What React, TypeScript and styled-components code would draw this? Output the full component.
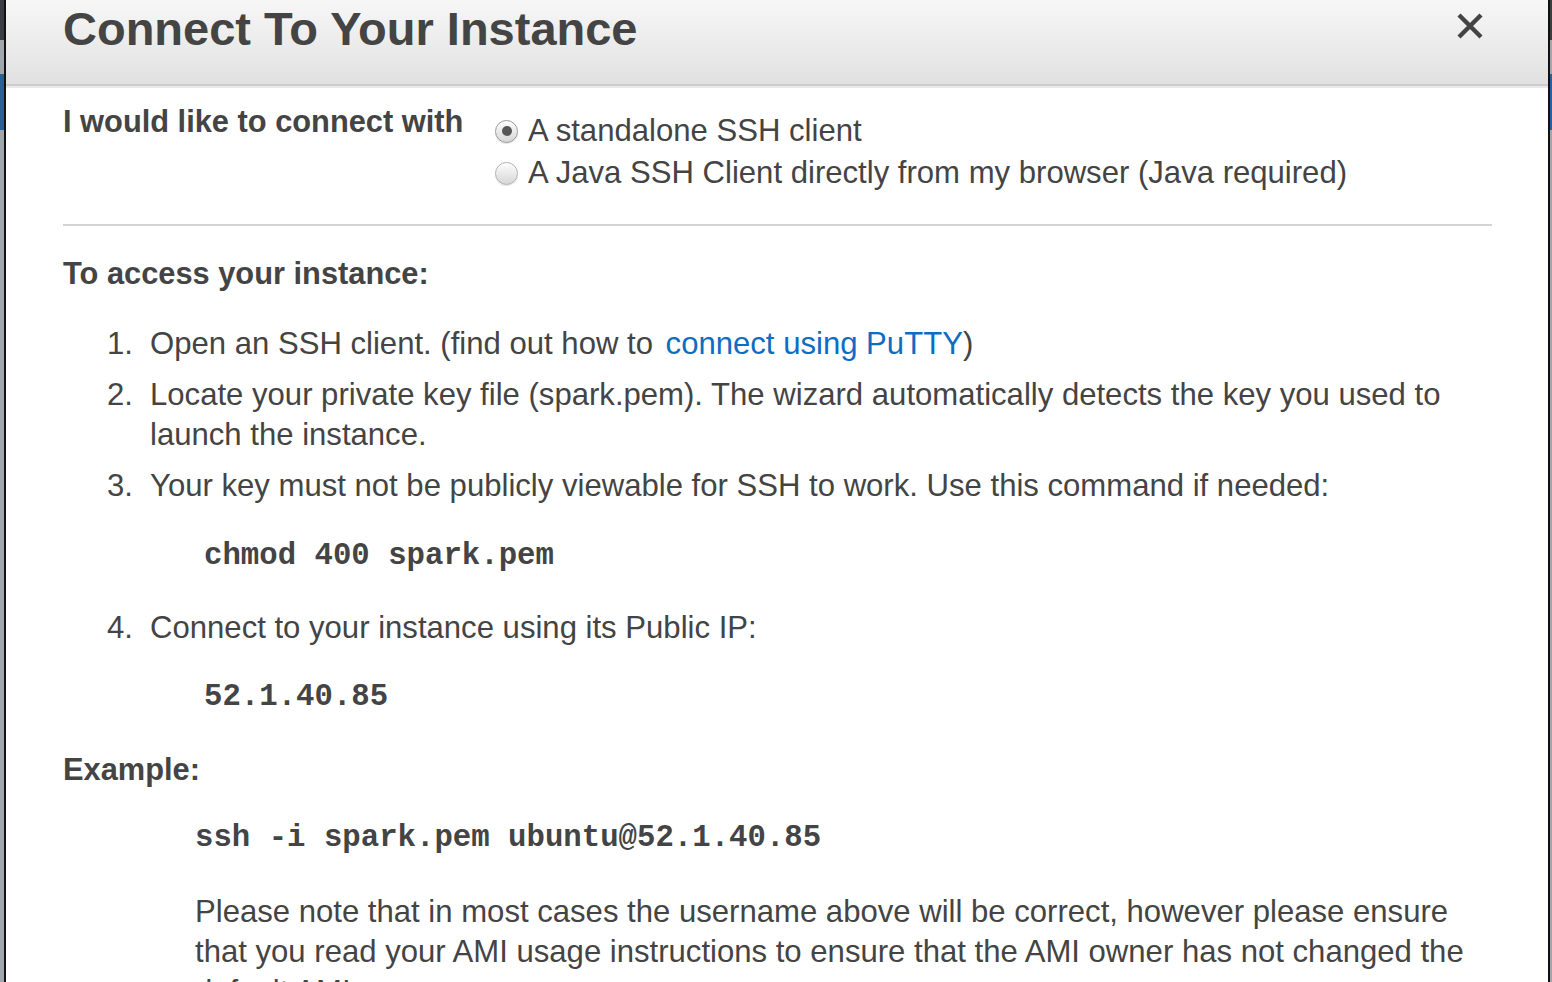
import React from "react";
import styled, { createGlobalStyle } from "styled-components";

const Global = createGlobalStyle`
  html, body { margin: 0; padding: 0; }
  body {
    background: #a2a6ad;
    font-family: "Liberation Sans", Arial, Helvetica, sans-serif;
    overflow: hidden;
  }
`;

const Page = styled.div`
  height: 982px;
  padding: 0 2px 0 4px;
  box-sizing: border-box;
  background: linear-gradient(#3a3d42 0 40px, #a2a6ad 40px 74px, #2b5f98 74px 130px, #a2a6ad 130px);
`;

const Modal = styled.div`
  height: 982px;
  background: #fff;
  border-left: 2px solid #111;
  border-right: 2px solid #111;
  overflow: hidden;
  color: #444;
`;

const Header = styled.div`
  height: 86px;
  box-sizing: border-box;
  padding: 5px 64px 0 57px;
  display: flex;
  justify-content: space-between;
  align-items: flex-start;
  background: linear-gradient(#f7f7f7, #e1e1e1);
  border-bottom: 2px solid #cdcdcd;
  box-shadow: 0 2px 0 #e9e9e9;
`;

const Title = styled.h1`
  margin: 0;
  font-size: 47px;
  line-height: 47px;
  font-weight: bold;
  color: #444;
`;

const Close = styled.button`
  margin-top: 7px;
  width: 28px;
  height: 28px;
  padding: 0;
  border: 0;
  background: none;
  display: flex;
`;

const Body = styled.div`
  padding: 15px 56px 0 57px;
  font-size: 31.1px;
`;

const ConnectRow = styled.div`
  display: flex;
  align-items: flex-start;
`;

const Label = styled.div`
  width: 432px;
  font-weight: bold;
  font-size: 30.8px;
  line-height: 42px;
`;

const Radios = styled.div`
  margin-top: 9px;
  display: flex;
  flex-direction: column;
`;

const RadioLine = styled.label`
  display: flex;
  align-items: center;
  height: 42px;
  line-height: 42px;
  gap: 10px;
`;

const RadioDot = styled.span<{ $on?: boolean }>`
  width: 23px;
  height: 23px;
  box-sizing: border-box;
  border-radius: 50%;
  border: 1px solid ${(p) => (p.$on ? "#999" : "#b0b0b0")};
  background: linear-gradient(#fdfdfd, #d6d6d6);
  box-shadow: inset 0 1px 1px #fff, 0 1px 1px rgba(0,0,0,0.1);
  display: flex;
  align-items: center;
  justify-content: center;
  &::after {
    content: "";
    width: 10px;
    height: 10px;
    border-radius: 50%;
    background: ${(p) => (p.$on ? "#555" : "transparent")};
  }
`;

const Rule = styled.hr`
  margin: 30px 0 0;
  border: 0;
  border-top: 2px solid #d4d4d4;
`;

const Heading = styled.div<{ $top: number }>`
  margin-top: ${(p) => p.$top}px;
  font-weight: bold;
  font-size: 30.8px;
  line-height: 42px;
`;

const Steps = styled.ol`
  list-style: none;
  margin: 29px 0 0;
  padding: 0 0 0 44px;
`;

const Step = styled.li`
  display: grid;
  grid-template-columns: 43px 1fr;
  line-height: 40px;
  margin-bottom: 11px;
  &:last-child { margin-bottom: 0; }
`;

const Num = styled.span``;

const Link = styled.a`
  color: #0d6cc4;
  text-decoration: none;
  margin-left: 4px;
`;

const Code = styled.div<{ $top: number; $bottom?: number; $indent: number }>`
  font-family: "Liberation Mono", "Courier New", monospace;
  font-weight: bold;
  font-size: 30.7px;
  line-height: 40px;
  margin: ${(p) => p.$top}px 0 ${(p) => p.$bottom ?? 0}px ${(p) => p.$indent}px;
`;

const Note = styled.p`
  margin: 34px 0 0 132px;
  max-width: 1285px;
  line-height: 40px;
`;

export default function App() {
  return (
    <>
      <Global />
      <Page>
        <Modal>
          <Header>
            <Title>Connect To Your Instance</Title>
            <Close aria-label="Close">
              <svg width="28" height="28" viewBox="0 0 28 28">
                <path d="M3 3 L25 25 M25 3 L3 25" stroke="#444" strokeWidth="4.4" strokeLinecap="butt" />
              </svg>
            </Close>
          </Header>
          <Body>
            <ConnectRow>
              <Label>I would like to connect with</Label>
              <Radios>
                <RadioLine>
                  <RadioDot $on />A standalone SSH client
                </RadioLine>
                <RadioLine>
                  <RadioDot />A Java SSH Client directly from my browser (Java required)
                </RadioLine>
              </Radios>
            </ConnectRow>
            <Rule />
            <Heading $top={27}>To access your instance:</Heading>
            <Steps>
              <Step>
                <Num>1.</Num>
                <span>
                  Open an SSH client. (find out how to <Link href="#">connect using PuTTY</Link>)
                </span>
              </Step>
              <Step>
                <Num>2.</Num>
                <span>
                  Locate your private key file (spark.pem). The wizard automatically detects the key you used to launch the instance.
                </span>
              </Step>
              <Step>
                <Num>3.</Num>
                <div>
                  Your key must not be publicly viewable for SSH to work. Use this command if needed:
                  <Code $top={30} $bottom={21} $indent={54}>chmod 400 spark.pem</Code>
                </div>
              </Step>
              <Step>
                <Num>4.</Num>
                <div>
                  Connect to your instance using its Public IP:
                  <Code $top={29} $indent={54}>52.1.40.85</Code>
                </div>
              </Step>
            </Steps>
            <Heading $top={32}>Example:</Heading>
            <Code $top={27} $indent={132}>ssh -i spark.pem ubuntu@52.1.40.85</Code>
            <Note>
              Please note that in most cases the username above will be correct, however please ensure that you read your AMI usage instructions to ensure that the AMI owner has not changed the default AMI username.
            </Note>
          </Body>
        </Modal>
      </Page>
    </>
  );
}
